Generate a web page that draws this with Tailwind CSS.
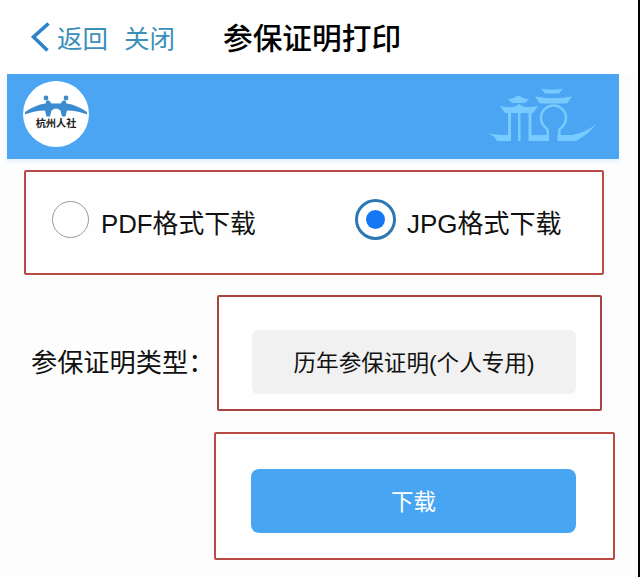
<!DOCTYPE html>
<html lang="zh-CN">
<head>
  <meta charset="UTF-8" />
  <meta name="viewport" content="width=device-width, initial-scale=1.0"/>
  <title>参保证明打印</title>
  <script src="https://cdn.jsdelivr.net/npm/@tailwindcss/browser@4"></script>
</head>
<body class="bg-white">
  <div class="w-[640px] h-[577px] overflow-hidden bg-[#fdfdfd] border-r-2 border-black text-[#111] font-['Liberation_Sans','Noto_Sans_CJK_SC',sans-serif]">

    <!-- Nav bar -->
    <header class="h-[74px] pt-[3px] pl-[31px] flex items-center bg-white whitespace-nowrap">
      <svg class="-mt-[3px] w-[19px] h-[30px] shrink-0" viewBox="0 0 19 30" fill="none" stroke="#2b83cb" stroke-width="3.6">
        <path d="M17.5 1.500L2.500 15L16.500 28.500"/>
      </svg>
      <a class="ml-[7px] w-[67px] text-[25.5px] leading-[38px] text-[#3b8fb9]">返回</a>
      <a class="w-[99px] text-[25.5px] leading-[38px] text-[#3b8fb9]">关闭</a>
      <h1 class="text-[29.7px] leading-[38px] font-medium text-black">参保证明打印</h1>
    </header>

    <!-- Banner -->
    <div class="ml-[7px] w-[612px] h-[85px] pl-4 pr-[17px] flex items-center justify-between bg-[#4ba5f2] shadow-[0_3px_4px_rgba(75,165,242,0.12)]">
      <div class="mb-[5px] w-[66px] h-[66px] rounded-full bg-white flex flex-col items-center">
        <svg class="mt-[13px] w-[66px] h-[24px] shrink-0" viewBox="0 0 66 24" fill="#3b8bce">
          <circle cx="23" cy="4" r="2.400"/>
          <circle cx="43" cy="4" r="2.400"/>
          <path d="M2 18Q12 11 22.500 9.500L23.500 6.500L26 6.500L28.500 9.500H37.500L40 6.500L42.500 6.500L43.500 9.500Q54 11 64 18V20.500Q54 16.500 44 16.500L42.500 22.500H39L37.500 16.500Q33 12.500 28.500 16.500L27 22.500H23.500L22 16.500Q12 16.500 2 20.500Z"/>
        </svg>
        <span class="text-[10.2px] leading-[12px] font-bold text-[#222] whitespace-nowrap">杭州人社</span>
      </div>
      <svg class="mt-[-3px] w-[118px] h-[62px]" viewBox="0 0 118 62" fill="#78cbff">
        <!-- small pavilion -->
        <path d="M24 15Q30 15 33 12H36Q39 15 45 15L41 19H28Z"/>
        <path d="M16 22Q25 24 31 22.500L35 20L39 22.500Q45 24 54 22L49 29H21Z"/>
        <path d="M24 29H27V57H13Q10 52 5 49Q12 51.500 24 51Z"/>
        <path d="M34 29H36.500V57H34Z"/>
        <!-- big pavilion and moon gate -->
        <path d="M57 4.500Q68 7 79 4.500L75 9.500H61Z"/>
        <path d="M51 12.500Q69 16 88 12.500L83 19.500H56Z"/>
        <path d="M44.500 29H47.500V51H65V57H44.500Z"/>
        <path d="M73.500 51H88Q103 48 112 40Q105 50 92 57H73.500Z"/>
        <path d="M63.800 53V47.500Q63.800 45 61.500 43.500A12.500 12.500 0 1 1 77.500 43.500Q75.200 45 75.200 47.500V53" fill="none" stroke="#78cbff" stroke-width="2.500"/>
      </svg>
    </div>

    <!-- Format -->
    <div class="ml-6 mt-[11px] w-[580px] h-[105px] pl-[26px] pt-[27px] flex items-start bg-[#fefefe] border-2 border-[#b94a46] rounded-xs whitespace-nowrap">
      <span class="mt-0.5 w-[37px] h-[37px] shrink-0 rounded-full border-[1.5px] border-[#999] bg-white"></span>
      <span class="ml-[12px] mt-[6px] w-[256px] text-[25.8px] leading-[38px]">PDF格式下载</span>
      <span class="-ml-0.5 w-[41px] h-[41px] shrink-0 rounded-full border-[3px] border-[#2b78b4] bg-white flex items-center justify-center">
        <span class="w-[19px] h-[19px] rounded-full bg-[#1478f5]"></span>
      </span>
      <span class="ml-[11px] mt-[6px] text-[26px] leading-[38px]">JPG格式下载</span>
    </div>

    <!-- Certificate type -->
    <div class="mt-[20px] ml-[31px] flex items-start">
      <label class="mt-[49px] w-[186px] flex text-[26.2px] leading-[38px] whitespace-nowrap">参保证明类型<span>：</span></label>
      <div class="w-[385px] h-[116px] pl-[33px] pt-[33px] bg-[#fefefe] border-2 border-[#a8443f] rounded-xs">
        <div class="w-[324px] h-[64px] pt-[3px] rounded-md bg-[#f1f1f1] flex items-center justify-center text-[22.6px] whitespace-nowrap">历年参保证明(个人专用)</div>
      </div>
    </div>

    <!-- Download -->
    <div class="mt-[21px] ml-[214px] w-[401px] h-[128px] pl-[35px] pt-[35px] bg-[#fefefe] border-2 border-[#b94a46] rounded-xs">
      <button class="block w-[325px] h-[64px] pt-1 rounded-lg bg-[#48a5f2] text-white text-[22.5px]">下载</button>
    </div>
  </div>
</body>
</html>
